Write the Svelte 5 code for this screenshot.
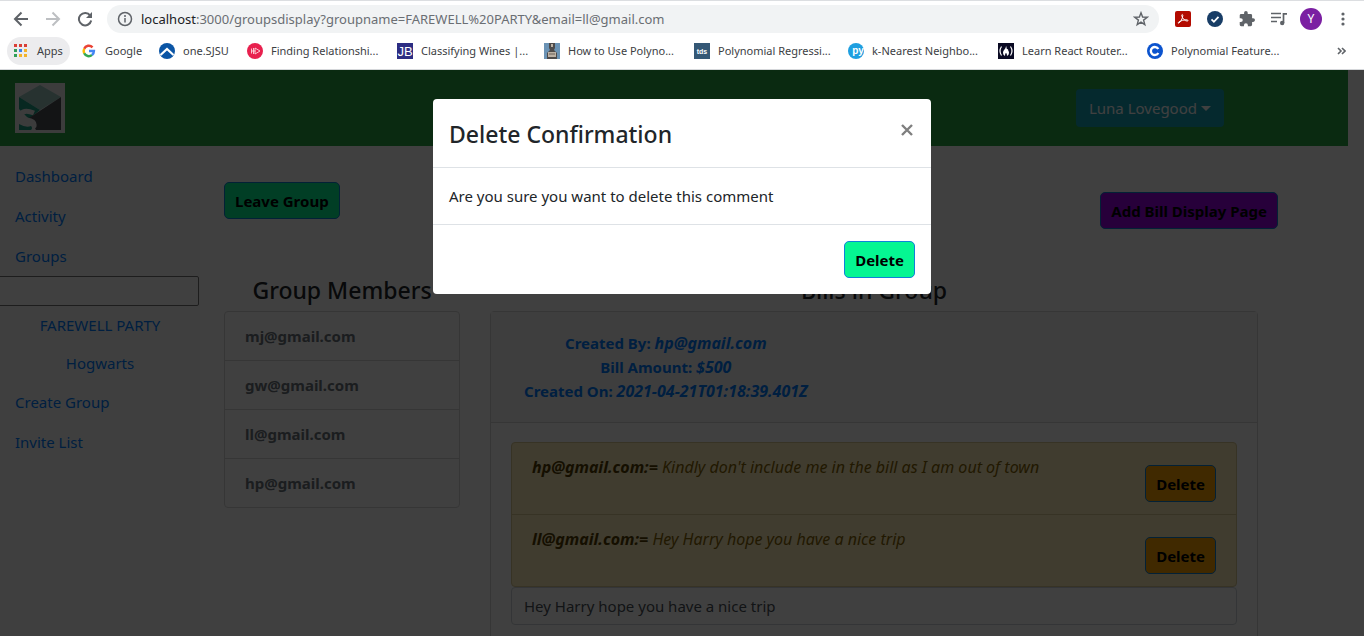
<script>
  const bookmarks = [
    { label: 'Google', icon: 'google', width: 78 },
    { label: 'one.SJSU', icon: 'sjsu', width: 88 },
    { label: 'Finding Relationshi...', icon: 'finding', width: 150 },
    { label: 'Classifying Wines |...', icon: 'jb', width: 147 },
    { label: 'How to Use Polyno...', icon: 'mlm', width: 150 },
    { label: 'Polynomial Regressi...', icon: 'tds', width: 154 },
    { label: 'k-Nearest Neighbo...', icon: 'py', width: 150 },
    { label: 'Learn React Router...', icon: 'fcc', width: 149 },
    { label: 'Polynomial Feature...', icon: 'coursera', width: 160 }
  ];
  const members = ['mj@gmail.com', 'gw@gmail.com', 'll@gmail.com', 'hp@gmail.com'];
  const comments = [
    { author: 'hp@gmail.com', text: "Kindly don't include me in the bill as I am out of town" },
    { author: 'll@gmail.com', text: 'Hey Harry hope you have a nice trip' }
  ];
  let search = $state('');
  let draft = $state('Hey Harry hope you have a nice trip');
  let open = $state(true);
</script>

<div class="window">
  <header class="browser">
    <div class="toolbar">
      <button class="tool" aria-label="Back">
        <svg width="16" height="16" viewBox="0 0 16 16" fill="none" stroke="#5f6368" stroke-width="2"><path d="M15 8H2.500M8.500 1.500 2 8l6.500 6.500" /></svg>
      </button>
      <button class="tool" aria-label="Forward">
        <svg width="16" height="16" viewBox="0 0 16 16" fill="none" stroke="#bdbfc2" stroke-width="2"><path d="M1 8h12.500M7.500 1.500 14 8l-6.500 6.500" /></svg>
      </button>
      <button class="tool" aria-label="Reload">
        <svg width="16" height="16" viewBox="0 0 16 16"><path d="M13.200 4.600A6.200 6.200 0 1 0 14.200 9.500" fill="none" stroke="#5f6368" stroke-width="2" /><path d="M15 1v6H9z" fill="#5f6368" /></svg>
      </button>
      <div class="address">
        <svg width="16" height="16" viewBox="0 0 16 16" fill="none" stroke="#5f6368" stroke-width="1.500"><circle cx="8" cy="8" r="6.500" /><path d="M8 7v4.500M8 4v2" /></svg>
        <div class="url"><span>localhost</span>:3000/groupsdisplay?groupname=FAREWELL%20PARTY&amp;email=ll@gmail.com</div>
        <button class="tool" aria-label="Bookmark this page">
          <svg width="16" height="16" viewBox="0 0 16 16" fill="none" stroke="#5f6368" stroke-width="1.400"><path d="m8 1.800 1.600 4.200 4.600.2-3.600 2.900 1.200 4.500L8 11.100l-3.800 2.500 1.200-4.500L1.800 6.200l4.600-.2z" /></svg>
        </button>
      </div>
      <div class="extensions">
        <button class="tool" aria-label="Acrobat">
          <svg width="16" height="16" viewBox="0 0 16 16"><rect width="16" height="16" rx="2" fill="#b30b00" /><path d="M3.500 12.200c1.800-.6 4.200-4.700 4.300-7.700 0-1.500-1.300-1.300-1 .2.500 2.700 3 5.300 5.500 5.400 1 0 .9-1.200-.4-1.300-2.500-.2-6.600 1-8.200 2.300-.7.600-.6 1.200-.2 1.100z" fill="none" stroke="#fff" /></svg>
        </button>
        <button class="tool" aria-label="Tasks">
          <svg width="16" height="16" viewBox="0 0 16 16"><circle cx="8" cy="8" r="8" fill="#183d66" /><path d="m4.500 8.300 2.400 2.500 4.600-5" fill="none" stroke="#fff" stroke-width="1.800" /></svg>
        </button>
        <button class="tool" aria-label="Extensions">
          <svg width="16" height="16" viewBox="1 1 22 22"><path fill="#5f6368" d="M20.500 11H19V7a2 2 0 0 0-2-2h-4V3.500a2.500 2.500 0 0 0-5 0V5H4a2 2 0 0 0-2 2v3.800h1.500a2.700 2.700 0 0 1 0 5.400H2V20a2 2 0 0 0 2 2h3.800v-1.500a2.700 2.700 0 0 1 5.400 0V22H17a2 2 0 0 0 2-2v-4h1.500a2.500 2.500 0 0 0 0-5z" /></svg>
        </button>
        <button class="tool" aria-label="Media controls">
          <svg width="16" height="16" viewBox="0 0 16 16"><path d="M0 2.500h10M0 6.500h10M0 10.500h6" stroke="#5f6368" stroke-width="1.700" /><path d="M12.500 12V2.800H16" fill="none" stroke="#5f6368" stroke-width="1.700" /><circle cx="11.200" cy="12" r="2.200" fill="#5f6368" /></svg>
        </button>
        <button class="avatar" aria-label="Profile">Y</button>
        <button class="tool" aria-label="Menu">
          <svg width="16" height="16" viewBox="0 0 16 16" fill="#5f6368"><circle cx="8" cy="3" r="1.600" /><circle cx="8" cy="8" r="1.600" /><circle cx="8" cy="13" r="1.600" /></svg>
        </button>
      </div>
    </div>

    <nav class="bookmarks" aria-label="Bookmarks">
      <button class="apps">
        <svg width="14" height="14" viewBox="0 0 14 14"><path fill="#d93f36" d="M0 0h3v3H0zM5 0h3v3H5zM10 0h3v3h-3z" /><path fill="#2f9e57" d="M0 5h3v3H0zM0 10h3v3H0z" /><path fill="#3b83ee" d="M5 5h3v3H5z" /><path fill="#f3b32b" d="M10 5h3v3h-3zM5 10h3v3H5zM10 10h3v3h-3z" /></svg>
        Apps
      </button>
      {#each bookmarks as mark}
        <a href="#top" class="bookmark" style:flex-basis="{mark.width}px">
          <svg width="16" height="16" viewBox="0 0 16 16" aria-hidden="true">
            {#if mark.icon === 'google'}
              <g fill="none" stroke-width="2.500"><path stroke="#ea4335" d="M3.200 5.700A5 5 0 0 1 11.500 4.300" /><path stroke="#fbbc05" d="M3.200 5.700a5 5 0 0 0 0 4.600" /><path stroke="#34a853" d="M3.200 10.300a5 5 0 0 0 7.800 1.600" /><path stroke="#4285f4" d="M11 11.900A5 5 0 0 0 12.900 8H8" /></g>
            {:else if mark.icon === 'sjsu'}
              <circle cx="8" cy="8" r="8" fill="#0b55a5" /><path d="m1.500 12 6.500-6 6.500 6" fill="none" stroke="#fff" stroke-width="2.200" />
            {:else if mark.icon === 'finding'}
              <circle cx="8" cy="8" r="8" fill="#e8204e" /><path d="M4.500 5.500v5M6.500 5v6M4.500 8h4M8 5l5 3-5 3z" fill="none" stroke="#ffd5dd" stroke-width=".9" />
            {:else if mark.icon === 'jb'}
              <rect width="16" height="16" fill="#2c2d83" /><text x="8" y="13" class="glyph" font-size="13">JB</text>
            {:else if mark.icon === 'mlm'}
              <rect width="16" height="16" fill="#6b93b5" /><path fill="#4d4a4a" d="M5 0h6v5l-1 2 3 3v6H3v-6l3-3-1-2z" /><path fill="#bcb1a4" d="M7 1h2v3H7zM4 9h8v5H4z" /><path stroke="#6b6059" d="M5 11h6" />
            {:else if mark.icon === 'tds'}
              <rect width="16" height="16" fill="#355876" /><text x="8" y="11" class="glyph bold" font-size="7">tds</text>
            {:else if mark.icon === 'py'}
              <circle cx="8" cy="8" r="8" fill="#1e9fe0" /><text x="10" y="11" class="glyph bold" font-size="10">py</text>
            {:else if mark.icon === 'fcc'}
              <rect width="16" height="16" fill="#0a0a23" /><path d="M3.500 3.500q-3 4.500 0 9M12.500 3.500q3 4.500 0 9" fill="none" stroke="#fff" stroke-width="1.200" /><path fill="#fff" d="M8 3c0 3-3 4-3 7q0 2 2 3 0-3 1-3t1 3q2-1 2-3c0-2-1-2-1-4-2 1-1-2-2-3z" />
            {:else}
              <circle cx="8" cy="8" r="8" fill="#0b53ce" /><path d="M11.300 6A4 4 0 1 0 11.300 10" fill="none" stroke="#fff" stroke-width="2.400" />
            {/if}
          </svg>
          <span>{mark.label}</span>
        </a>
      {/each}
      <button class="more" aria-label="More bookmarks">
        <svg width="9" height="8" viewBox="0 0 9 8" fill="none" stroke="#5f6368" stroke-width="1.600"><path d="m1 1 3 3-3 3M5 1l3 3-3 3" /></svg>
      </button>
    </nav>
  </header>

  <div class="page">
    <div class="topbar">
      <svg class="logo" width="50" height="50" viewBox="0 0 50 50" aria-label="Splitwise" role="img">
        <rect width="50" height="50" fill="#efefef" />
        <path fill="#9ac8c0" d="M25 2 46 14 25 27 4 14z" />
        <path fill="#1c9e84" d="M4 14 25 27 14 36 4 26z" />
        <path fill="#4d5056" d="M46 14v33H21L14 35z" />
        <path d="M19 30q-10-4-13 1-1 5 6 6 8 1 7 6-3 5-15 0" fill="none" stroke="#efefef" stroke-width="5" />
        <path fill="#1c9e84" d="M4 41q7 4 12 2 2 2 0 4H4z" />
      </svg>
      <button class="user">Luna Lovegood <i class="caret"></i></button>
    </div>

    <div class="columns">
      <nav class="side" aria-label="Main">
        <a href="#top">Dashboard</a>
        <a href="#top">Activity</a>
        <a href="#top">Groups</a>
        <input type="text" aria-label="Search groups" bind:value={search} />
        <a href="#top" class="group">FAREWELL PARTY</a>
        <a href="#top" class="group">Hogwarts</a>
        <a href="#top">Create Group</a>
        <a href="#top">Invite List</a>
      </nav>

      <main>
        <div class="actions">
          <button class="btn green">Leave Group</button>
          <button class="btn purple">Add Bill Display Page</button>
        </div>
        <div class="panels">
          <section class="members">
            <h2>Group Members</h2>
            <ul>
              {#each members as member}
                <li>{member}</li>
              {/each}
            </ul>
          </section>
          <section class="bills">
            <h2>Bills in Group</h2>
            <article class="card">
              <div class="card-head">
                <a href="#top">
                  Created By: <em>hp@gmail.com</em><br />
                  Bill Amount: <em>$500</em><br />
                  Created On: <em>2021-04-21T01:18:39.401Z</em>
                </a>
              </div>
              <div class="card-body">
                <ul class="comments">
                  {#each comments as comment}
                    <li>
                      <p><strong>{comment.author}:=</strong> {comment.text}</p>
                      <button class="btn orange">Delete</button>
                    </li>
                  {/each}
                </ul>
                <input type="text" class="draft" aria-label="Comment" bind:value={draft} />
              </div>
            </article>
          </section>
        </div>
      </main>
    </div>

    {#if open}
      <div class="backdrop">
        <div class="modal" role="dialog" aria-modal="true" aria-labelledby="title">
          <div class="modal-head">
            <h2 id="title">Delete Confirmation</h2>
            <button class="close" aria-label="Close" onclick={() => (open = false)}>
              <svg width="12" height="12" viewBox="0 0 12 12" fill="none" stroke="#7f7f7f" stroke-width="2.400"><path d="m1 1 10 10M11 1 1 11" /></svg>
            </button>
          </div>
          <div class="modal-body">Are you sure you want to delete this comment</div>
          <div class="modal-foot"><button class="btn green">Delete</button></div>
        </div>
      </div>
    {/if}
  </div>
</div>

<style>
  :global(body) { margin: 0; }
  .window, .window * { box-sizing: border-box; }
  .window {
    height: 100vh;
    display: flex;
    flex-direction: column;
    overflow: hidden;
    font: 15px/24px "Segoe UI", "Noto Sans", sans-serif;
    color: #212529;
    background: #fff;
  }
  button, input { font: inherit; color: inherit; }
  button { border: 0; background: none; padding: 0; cursor: pointer; }
  a { color: #007bff; text-decoration: none; }
  h2 { margin: 0; font-size: 23px; line-height: 26px; font-weight: 500; }
  ul { list-style: none; margin: 0; padding: 0; }
  svg { display: block; flex: none; }

  .browser { flex: none; border-top: 1px solid #dcdee1; border-bottom: 1px solid #d5d7da; background: #fff; }
  .toolbar { display: flex; align-items: center; gap: 16px; padding: 4px 13px 1px; height: 33px; }
  .tool { flex: none; }
  .address {
    flex: 1;
    display: flex;
    align-items: center;
    gap: 8px;
    height: 28px;
    padding: 0 10px;
    margin-left: -2px;
    border-radius: 14px;
    background: #f1f3f4;
  }
  .url { flex: 1; font-size: 13px; color: #6a6e73; white-space: nowrap; overflow: hidden; }
  .url span { color: #202124; }
  .extensions { display: flex; align-items: center; gap: 16px; }
  .avatar { width: 22px; height: 22px; border-radius: 50%; background: #7b1fa2; color: #fff; font-size: 12px; line-height: 22px; margin: 0 -3px; }
  .bookmarks { display: flex; align-items: center; height: 35px; padding: 0 18px 1px 7px; font-size: 11px; color: #3c4043; }
  .apps { display: flex; align-items: center; gap: 9px; width: 63px; height: 28px; padding: 0 7px; margin-right: 11px; border-radius: 14px; background: #ececee; }
  .bookmark { display: flex; align-items: center; gap: 8px; flex: 0 0 auto; color: #3c4043; white-space: nowrap; }
  .more { margin-left: auto; }
  .glyph { fill: #fff; text-anchor: middle; font-family: "Liberation Sans", sans-serif; }
  .bold { font-weight: 700; }

  .page { position: relative; flex: 1; min-height: 0; overflow: hidden; }
  .topbar { display: flex; align-items: center; justify-content: space-between; height: 76px; margin-right: 16px; padding: 0 124px 0 15px; background: #28a745; }
  .user { display: flex; align-items: center; gap: 4px; height: 38px; padding: 0 13px; border-radius: 4px; background: #17a2b8; color: #fff; }
  .caret { border: 5px solid transparent; border-top-color: currentColor; border-bottom: 0; }

  .columns { display: flex; }
  .side { flex: 0 0 200px; min-width: 0; display: flex; flex-direction: column; padding-top: 10px; height: 560px; background: #fafafa; }
  .side a { padding: 8px 15px; }
  .side input { min-width: 0; height: 30px; margin: 0 1px 0 -2px; border: 1px solid #767676; border-radius: 2px; background: #fff; }
  .side .group { padding: 7px 0; text-align: center; }
  main { flex: 1; min-width: 0; padding: 36px 86px 0 24px; }
  .actions { display: flex; justify-content: space-between; align-items: flex-start; height: 95px; }
  .btn { height: 37px; padding: 0 10px; border: 1px solid #0f82d8; border-radius: 5px; font-weight: 700; color: #000; }
  .green { background: #05f692; }
  .purple { background: #9b00e8; margin-top: 10px; }
  .orange { background: #ffa500; }
  .panels { display: flex; gap: 30px; padding-right: 20px; }
  .panels h2 { text-align: center; margin-bottom: 8px; }
  .members { flex: 0 0 236px; }
  .members ul { border: 1px solid #d5d5d5; border-radius: 4px; }
  .members li { padding: 12px 20px; font-weight: 700; color: #6c757d; }
  .members li + li { border-top: 1px solid #d5d5d5; }
  .bills { flex: 1; min-width: 0; }
  .card { border: 1px solid #d5d5d5; border-radius: 4px; }
  .card-head { padding: 19px 33px; border-bottom: 1px solid #d5d5d5; background: #f7f7f7; }
  .card-head a { display: block; width: max-content; text-align: center; font-weight: 700; }
  .card-head em { font-size: 16px; }
  .card-body { padding: 19px 20px; }
  .comments { border: 1px solid #d9c995; border-radius: 4px; background: #ffeeba; color: #856404; }
  .comments li { display: flex; justify-content: space-between; height: 71px; padding: 12px 20px; }
  .comments li + li { height: 72px; border-top: 1px solid #d9c995; }
  .comments p { margin: 0; font-size: 16px; font-style: italic; }
  .comments strong { color: #533f03; }
  .comments .btn { margin-top: 10px; }
  .draft { display: block; width: 100%; height: 38px; padding: 0 12px; border: 1px solid #ced4da; border-radius: 4px; background: #fff; color: #495057; }

  .backdrop { position: absolute; inset: 0; padding-top: 29px; background: rgba(0, 0, 0, 0.75); }
  .modal { width: 498px; max-width: 100%; margin: 0 auto; border-radius: 4px; background: #fff; }
  .modal-head { display: flex; justify-content: space-between; align-items: flex-start; padding: 22px 18px 20px 16px; border-bottom: 1px solid #dee2e6; }
  .close { margin-top: 3px; }
  .modal-body { padding: 16px; }
  .modal-foot { display: flex; justify-content: flex-end; padding: 16px; border-top: 1px solid #dee2e6; }
</style>
